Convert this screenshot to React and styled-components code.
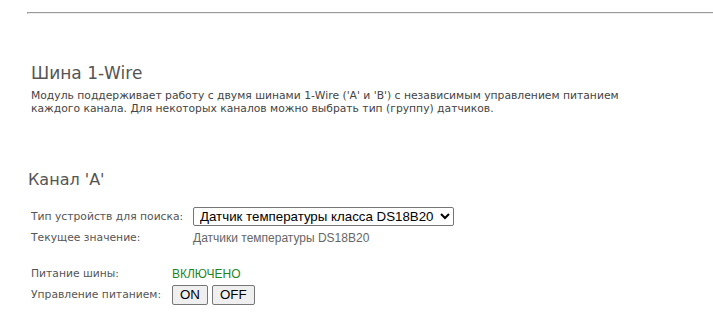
import React from "react";
import styled, { createGlobalStyle } from "styled-components";

const Global = createGlobalStyle`
  html, body {
    margin: 0;
    background: #fff;
  }
  body {
    font-family: "DejaVu Sans", Verdana, sans-serif;
    color: #444;
  }
`;

const Page = styled.div`
  padding: 12px 0 0 27px;
`;

const Rule = styled.hr`
  margin: 0;
  border: 0;
  border-top: 1px solid #9a9a9a;
  border-bottom: 1px solid #eee;
  border-left: 1px solid #9a9a9a;
  height: 0;
`;

const Section = styled.section`
  padding-left: 4px;
`;

const Title = styled.h2`
  margin: 48px 0 0;
  font-size: 17px;
  font-weight: normal;
  color: #555;
  line-height: 22px;
`;

const Intro = styled.p`
  margin: 5px 0 0;
  font-size: 10.75px;
  line-height: 13px;
  color: #444;
  width: 620px;
`;

const Channel = styled.h3`
  margin: 55px 0 0 -3px;
  font-size: 16px;
  font-weight: normal;
  color: #555;
  line-height: 20px;
`;

const Rows = styled.div`
  margin-top: 16px;
  display: flex;
  flex-direction: column;
`;

const Row = styled.div`
  display: grid;
  grid-template-columns: ${(p) => p.$label}px auto;
  align-items: center;
  height: ${(p) => p.$h || 21}px;
  margin-top: ${(p) => p.$gap || 0}px;
`;

const Label = styled.span`
  font-size: 10.75px;
  color: #555;
`;

const Value = styled.span`
  font-family: "Liberation Sans", Arial, sans-serif;
  font-size: 12px;
  color: ${(p) => (p.$on ? "#1f861f" : "#666")};
`;

const Select = styled.select`
  font-family: "Liberation Sans", Arial, sans-serif;
  font-size: 13.3px;
  color: #000;
  height: 19px;
  width: 261px;
  padding: 0 0 0 2px;
  border: 1px solid #767676;
  border-radius: 2px;
  background: #fff;
`;

const Buttons = styled.div`
  display: flex;
  gap: 4px;
`;

const Button = styled.button`
  font-family: "Liberation Sans", Arial, sans-serif;
  font-size: 13.3px;
  color: #000;
  height: 20px;
  padding: 0 7px;
  border: 1px solid #767676;
  border-radius: 2px;
  background: #efefef;
`;

export default function App() {
  return (
    <>
      <Global />
      <Page>
        <Rule />
        <Section>
          <Title>Шина 1-Wire</Title>
          <Intro>
            Модуль поддерживает работу с двумя шинами 1-Wire ('A' и 'B') с
            независимым управлением питанием каждого канала. Для некоторых
            каналов можно выбрать тип (группу) датчиков.
          </Intro>
          <Channel>Канал 'A'</Channel>
          <Rows>
            <Row $label={162}>
              <Label>Тип устройств для поиска:</Label>
              <Select defaultValue="ds18b20">
                <option value="ds18b20">Датчик температуры класса DS18B20</option>
              </Select>
            </Row>
            <Row $label={162}>
              <Label>Текущее значение:</Label>
              <Value>Датчики температуры DS18B20</Value>
            </Row>
            <Row $label={141} $gap={15}>
              <Label>Питание шины:</Label>
              <Value $on>ВКЛЮЧЕНО</Value>
            </Row>
            <Row $label={141}>
              <Label>Управление питанием:</Label>
              <Buttons>
                <Button>ON</Button>
                <Button>OFF</Button>
              </Buttons>
            </Row>
          </Rows>
        </Section>
      </Page>
    </>
  );
}
